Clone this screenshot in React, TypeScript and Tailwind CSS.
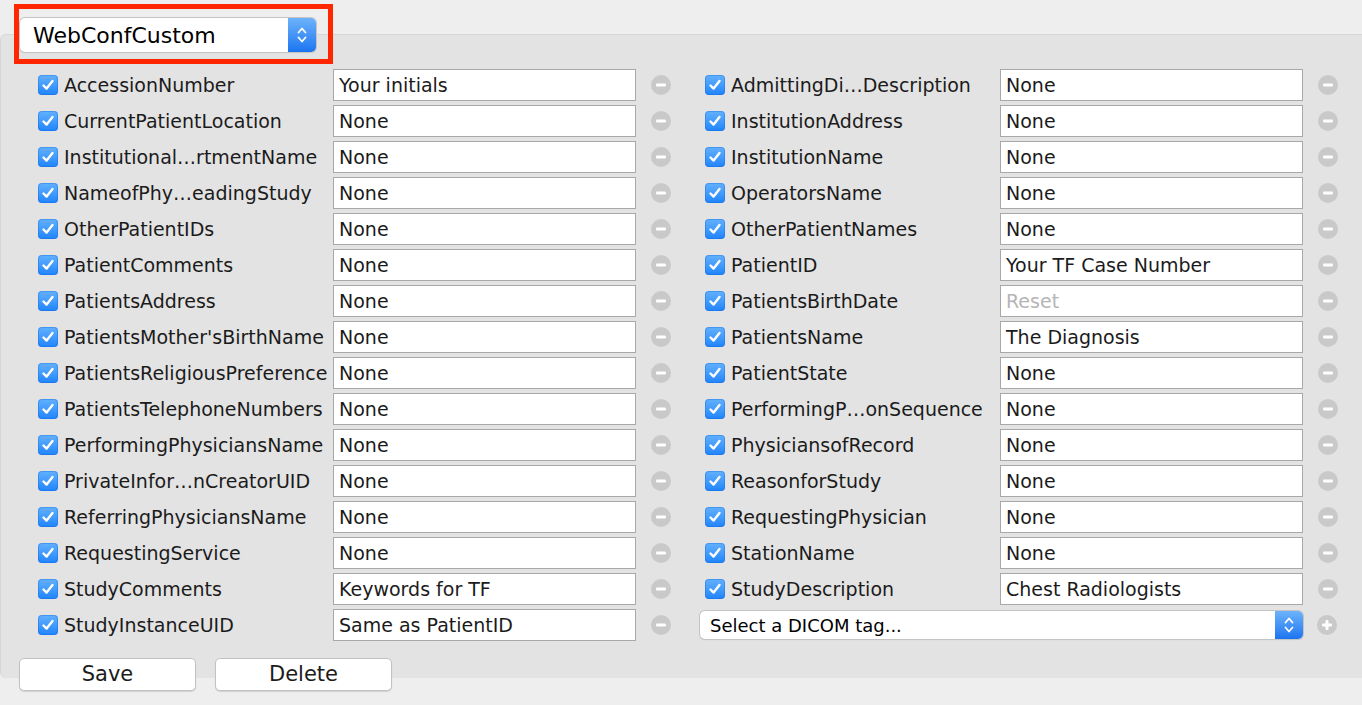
import type { ReactNode } from 'react'

type Row = { tag: string; value: string; placeholder?: boolean }

const LEFT: Row[] = [
  { tag: 'AccessionNumber', value: 'Your initials' },
  { tag: 'CurrentPatientLocation', value: 'None' },
  { tag: 'Institutional…rtmentName', value: 'None' },
  { tag: 'NameofPhy…eadingStudy', value: 'None' },
  { tag: 'OtherPatientIDs', value: 'None' },
  { tag: 'PatientComments', value: 'None' },
  { tag: 'PatientsAddress', value: 'None' },
  { tag: "PatientsMother'sBirthName", value: 'None' },
  { tag: 'PatientsReligiousPreference', value: 'None' },
  { tag: 'PatientsTelephoneNumbers', value: 'None' },
  { tag: 'PerformingPhysiciansName', value: 'None' },
  { tag: 'PrivateInfor…nCreatorUID', value: 'None' },
  { tag: 'ReferringPhysiciansName', value: 'None' },
  { tag: 'RequestingService', value: 'None' },
  { tag: 'StudyComments', value: 'Keywords for TF' },
  { tag: 'StudyInstanceUID', value: 'Same as PatientID' },
]

const RIGHT: Row[] = [
  { tag: 'AdmittingDi…Description', value: 'None' },
  { tag: 'InstitutionAddress', value: 'None' },
  { tag: 'InstitutionName', value: 'None' },
  { tag: 'OperatorsName', value: 'None' },
  { tag: 'OtherPatientNames', value: 'None' },
  { tag: 'PatientID', value: 'Your TF Case Number' },
  { tag: 'PatientsBirthDate', value: 'Reset', placeholder: true },
  { tag: 'PatientsName', value: 'The Diagnosis' },
  { tag: 'PatientState', value: 'None' },
  { tag: 'PerformingP…onSequence', value: 'None' },
  { tag: 'PhysiciansofRecord', value: 'None' },
  { tag: 'ReasonforStudy', value: 'None' },
  { tag: 'RequestingPhysician', value: 'None' },
  { tag: 'StationName', value: 'None' },
  { tag: 'StudyDescription', value: 'Chest Radiologists' },
]

function Checkbox() {
  return (
    <div className="grid h-[20px] w-[20px] flex-none place-items-center rounded-[4px] bg-gradient-to-b from-[#62b1fd] to-[#1d84fb] shadow-[inset_0_0_0_1px_rgba(20,100,220,0.35)]">
      <svg width="14" height="14" viewBox="0 0 14 14" fill="none">
        <path d="M2.5 7.5 L5.6 10.6 L11.5 3" stroke="white" strokeWidth="2.4" strokeLinecap="round" strokeLinejoin="round" />
      </svg>
    </div>
  )
}

function RoundButton({ plus }: { plus?: boolean }) {
  return (
    <div className="grid h-[20px] w-[20px] flex-none place-items-center rounded-full bg-[#c9c9c9]">
      <svg width="12" height="12" viewBox="0 0 12 12">
        <rect x="1" y="4.5" width="10" height="3" rx="1" fill="white" />
        {plus && <rect x="4.5" y="1" width="3" height="10" rx="1" fill="white" />}
      </svg>
    </div>
  )
}

function Stepper({ h }: { h: number }) {
  return (
    <div
      className={`grid w-[28px] flex-none place-items-center rounded-r-[5px] bg-gradient-to-b from-[#6cb3fa] to-[#1a74f0] ${h === 34 ? 'h-[34px]' : 'h-[28px]'}`}
    >
      <svg width="12" height="20" viewBox="0 0 12 20" fill="none">
        <path d="M2.5 7.5 L6 3.5 L9.5 7.5" stroke="white" strokeWidth="1.8" strokeLinecap="round" strokeLinejoin="round" />
        <path d="M2.5 12.5 L6 16.5 L9.5 12.5" stroke="white" strokeWidth="1.8" strokeLinecap="round" strokeLinejoin="round" />
      </svg>
    </div>
  )
}

function TagRow({ row }: { row: Row }) {
  return (
    <div className="flex h-[32px] items-center">
      <Checkbox />
      <div className="ml-[6px] w-[269px] flex-none truncate text-[19px] text-[#1b1b1b]">{row.tag}</div>
      <div
        className={`flex h-[32px] w-[303px] flex-none items-center border border-[#a8a8a8] bg-white pl-[5px] text-[19px] ${
          row.placeholder ? 'text-[#b5b5b5]' : 'text-[#1b1b1b]'
        }`}
      >
        {row.value}
      </div>
      <div className="ml-[15px]">
        <RoundButton />
      </div>
    </div>
  )
}

function Button({ children }: { children: ReactNode }) {
  return (
    <div className="flex h-[33px] w-[177px] items-center justify-center rounded-[5px] border border-[#c2c2c2] bg-white text-[21px] text-[#1b1b1b] shadow-[0_1px_1px_rgba(0,0,0,0.12)]">
      {children}
    </div>
  )
}

export default function App() {
  return (
    <div
      className="relative h-[705px] w-[1362px] overflow-hidden bg-[#eeeeee]"
      style={{ fontFamily: '"DejaVu Sans", "Noto Sans", sans-serif' }}
    >
      <div className="relative z-10 ml-[20px] pt-[18px]">
        <div className="flex h-[34px] w-[296px] items-center rounded-[5px] bg-white shadow-[0_0_0_1px_#c4c4c4,0_1px_1px_rgba(0,0,0,0.15)]">
          <div className="flex-1 pl-[13px] text-[22px] text-black">WebConfCustom</div>
          <Stepper h={34} />
        </div>
      </div>

      <div className="-mt-[18px] h-[644px] rounded-l-[6px] border-t border-l border-[#d6d6d6] bg-[#e3e3e3] pl-[37px] pt-[34px]">
        <div className="flex gap-[34px]">
          <div className="flex flex-col gap-[4px]">
            {LEFT.map((r) => (
              <TagRow key={r.tag} row={r} />
            ))}
          </div>
          <div className="flex flex-col gap-[4px]">
            {RIGHT.map((r) => (
              <TagRow key={r.tag} row={r} />
            ))}
            <div className="flex h-[32px] items-center">
              <div className="-ml-[5px] flex h-[28px] w-[603px] items-center rounded-[5px] bg-white shadow-[0_0_0_1px_#c4c4c4,0_1px_1px_rgba(0,0,0,0.15)]">
                <div className="flex-1 pl-[10px] text-[18px] text-black">Select a DICOM tag...</div>
                <Stepper h={28} />
              </div>
              <div className="ml-[14px]">
                <RoundButton plus />
              </div>
            </div>
          </div>
        </div>
      </div>

      <div className="relative z-10 -mt-[20px] ml-[19px] flex gap-[19px]">
        <Button>Save</Button>
        <Button>Delete</Button>
      </div>

      <div className="absolute left-[14px] top-[4px] h-[60px] w-[319px] border-[5px] border-[#ff2600]" />
    </div>
  )
}
